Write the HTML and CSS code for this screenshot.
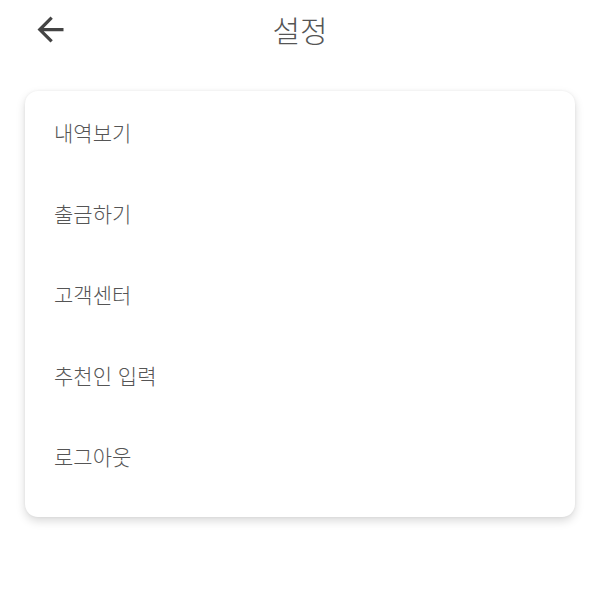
FILE: index.html
```html
<!DOCTYPE html>
<html lang="ko">
<head>
<meta charset="utf-8">
<link rel="stylesheet" href="styles.css">
</head>
<body>
<div class="app">
  <header class="header">
    <button class="back" aria-label="뒤로">
      <svg viewBox="0 0 24 24" width="39" height="39"><path fill="#444" d="M20 11H7.83l5.59-5.59L12 4l-8 8 8 8 1.41-1.41L7.83 13H20v-2z"/></svg>
    </button>
    <h1 class="title">설정</h1>
  </header>
  <ul class="card">
    <li class="item">내역보기</li>
    <li class="item">출금하기</li>
    <li class="item">고객센터</li>
    <li class="item">추천인 입력</li>
    <li class="item">로그아웃</li>
  </ul>
</div>
</body>
</html>
```
FILE: styles.css
```css
html, body {
  margin: 0;
  padding: 0;
  background: #fff;
  font-family: "Noto Sans CJK KR", "Noto Sans", sans-serif;
}
.app {
  width: 600px;
  height: 600px;
}
.header {
  position: relative;
  height: 58px;
  display: flex;
  align-items: center;
  justify-content: center;
}
.back {
  position: absolute;
  left: 31px;
  top: 10px;
  width: 39px;
  height: 39px;
  padding: 0;
  border: 0;
  background: none;
  display: flex;
}
.title {
  margin: 0;
  font-size: 30px;
  font-weight: 300;
  color: #555;
  line-height: 1;
}
.card {
  list-style: none;
  margin: 33px 25px 0;
  padding: 0 0 21px;
  background: #fff;
  border-radius: 13px;
  box-shadow: 0 4px 10px rgba(0,0,0,0.15), 0 0 3px rgba(0,0,0,0.06);
}
.item {
  height: 81px;
  display: flex;
  align-items: center;
  padding-left: 29px;
  font-size: 21px;
  font-weight: 300;
  color: #555;
}
```
